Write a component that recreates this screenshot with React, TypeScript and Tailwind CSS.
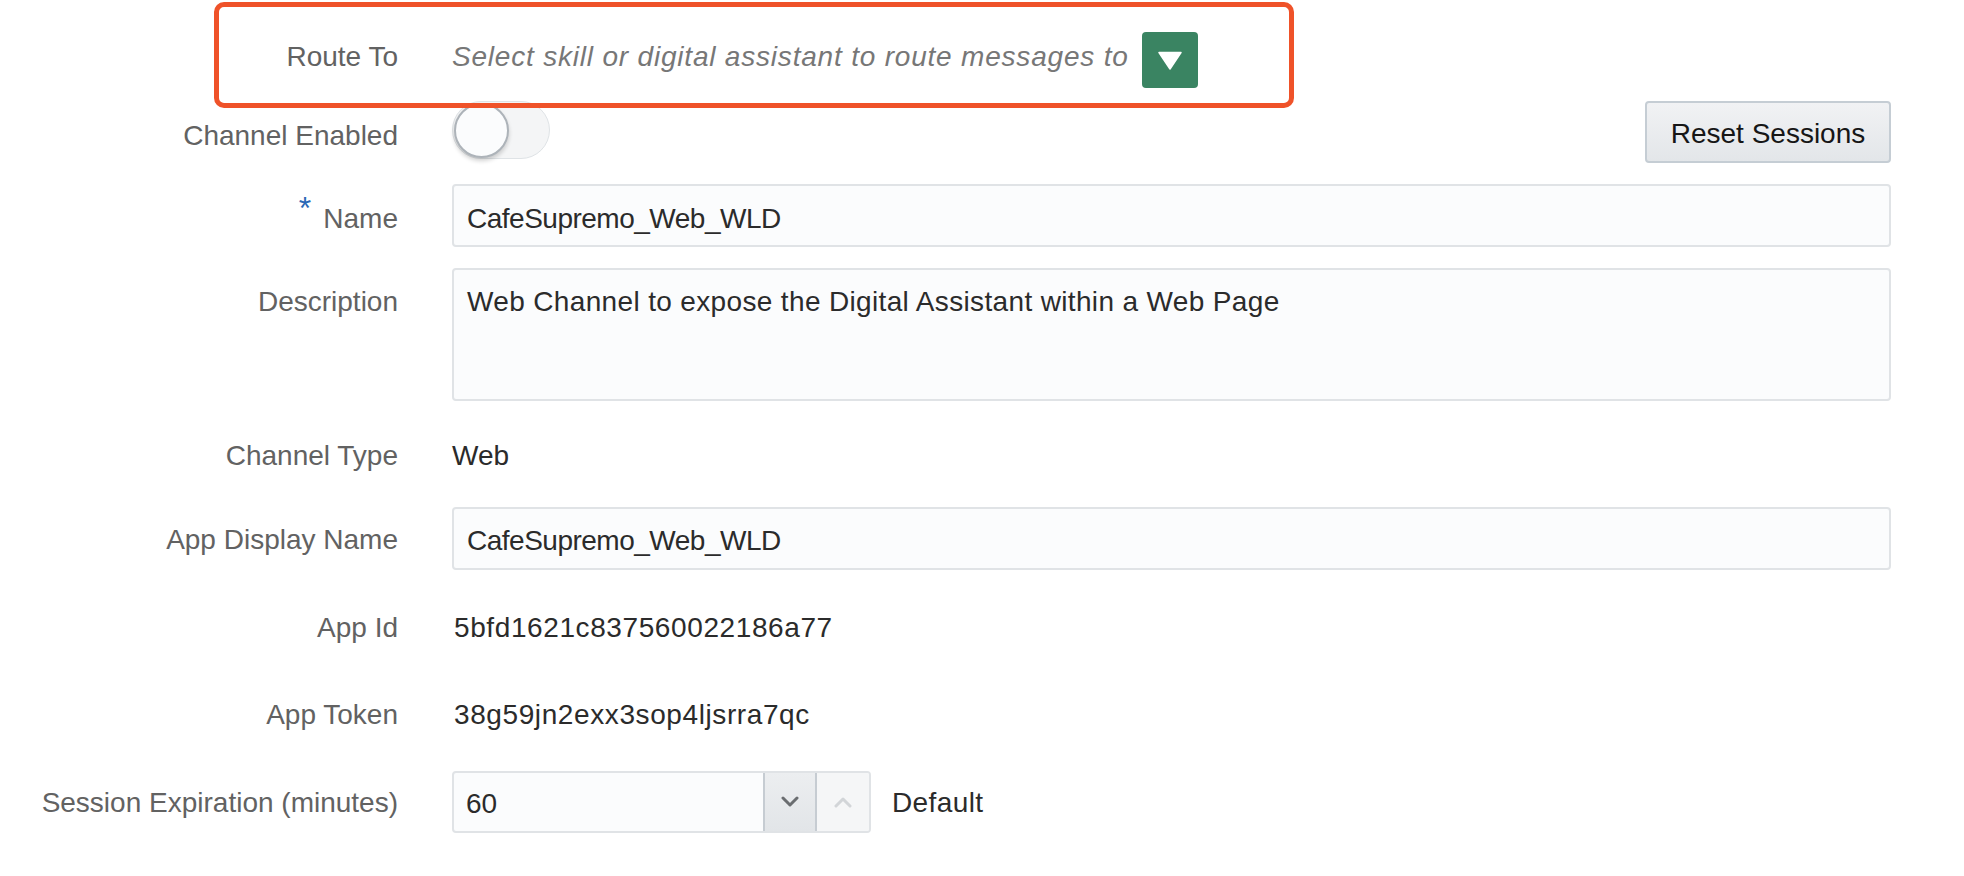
import React from "react";

function Label({ children, className = "" }: { children: React.ReactNode; className?: string }) {
    return (
        <div className={"w-[398px] shrink-0 text-right text-[#626262] " + className}>
            {children}
        </div>
    );
}

function Chevron({ up, color }: { up?: boolean; color: string }) {
    return (
        <svg width="18" height="12" viewBox="0 0 18 12">
            <polyline
                points={up ? "2,10 9,3 16,10" : "2,2 9,9 16,2"}
                fill="none"
                stroke={color}
                strokeWidth="3"
                strokeLinecap="round"
                strokeLinejoin="round"
            />
        </svg>
    );
}

export default function App() {
    const inputCls =
        "w-full h-[63px] px-[13px] pt-[6px] rounded-[4px] border-2 border-[#e0e3e6] bg-[#fbfcfd] text-[#2b2b2b] tracking-[-0.5px] outline-none";

    return (
        <div
            className="relative w-[1964px] h-[876px] bg-white pt-[32px] text-[28px] leading-[34px] overflow-hidden"
            style={{ fontFamily: '"Liberation Sans", Arial, sans-serif' }}
        >
            {/* annotation box around Route To */}
            <div className="absolute left-[214px] top-[2px] w-[1080px] h-[106px] border-[5px] border-[#ef5229] rounded-[10px] z-10" />

            {/* Route To */}
            <div className="flex items-center h-[56px]">
                <Label className="relative -top-[3px]">Route To</Label>
                <div className="ml-[54px] flex items-center">
                    <span className="relative -top-[3px] italic text-[#777777] tracking-[0.8px]">
                        Select skill or digital assistant to route messages to
                    </span>
                    <button className="ml-[13px] w-[56px] h-[56px] rounded-[4px] bg-[#3a8462] flex items-center justify-center">
                        <svg width="26" height="19" viewBox="0 0 26 19">
                            <path d="M2 1.5 H24 L13 18 Z" fill="#ffffff" strokeLinejoin="round" stroke="#ffffff" strokeWidth="1.5" />
                        </svg>
                    </button>
                </div>
            </div>

            {/* Channel Enabled */}
            <div className="flex items-center h-[63px] mt-[12px]">
                <Label className="pt-[8px]">Channel Enabled</Label>
                <div className="ml-[54px] w-[1439px] flex items-center justify-between">
                    <div className="w-[98px] h-[58px] rounded-full border border-[#dfe3e6] bg-[#f4f5f6] flex items-center -mt-[3px]">
                        <div className="ml-px w-[55px] h-[55px] rounded-full border-2 border-[#adb3b9] bg-[#fbfcfd] shadow-[0_3px_4px_rgba(0,0,0,0.18)]" />
                    </div>
                    <button className="w-[246px] h-[62px] pt-[5px] rounded-[4px] border-2 border-[#c5cdd4] bg-gradient-to-b from-[#f1f2f4] to-[#e3e6e9] text-[#161616]">
                        Reset Sessions
                    </button>
                </div>
            </div>

            {/* Name */}
            <div className="flex items-center h-[63px] mt-[21px]">
                <Label className="pt-[5px]">
                    <span className="relative -top-[9px] mr-[12px] text-[32px] text-[#2a68b5]">*</span>
                    Name
                </Label>
                <div className="ml-[54px] w-[1439px]">
                    <input readOnly value="CafeSupremo_Web_WLD" className={inputCls} />
                </div>
            </div>

            {/* Description */}
            <div className="flex items-start mt-[21px]">
                <Label className="pt-[17px]">Description</Label>
                <div className="ml-[54px] w-[1439px]">
                    <textarea
                        readOnly
                        value="Web Channel to expose the Digital Assistant within a Web Page"
                        className="block w-full h-[133px] px-[13px] pt-[15px] rounded-[4px] border-2 border-[#e0e3e6] bg-[#fbfcfd] text-[#2b2b2b] tracking-[0.35px] outline-none resize-none"
                    />
                </div>
            </div>

            {/* Channel Type */}
            <div className="flex items-center h-[62px] mt-[24px]">
                <Label>Channel Type</Label>
                <div className="ml-[54px] text-[#2b2b2b]">Web</div>
            </div>

            {/* App Display Name */}
            <div className="flex items-center h-[62px] mt-[20px]">
                <Label className="pt-[4px]">App Display Name</Label>
                <div className="ml-[54px] w-[1439px]">
                    <input readOnly value="CafeSupremo_Web_WLD" className={inputCls + " h-[62px]"} />
                </div>
            </div>

            {/* App Id */}
            <div className="flex items-center h-[62px] mt-[28px]">
                <Label>App Id</Label>
                <div className="ml-[56px] text-[#2b2b2b] tracking-[0.6px]">5bfd1621c837560022186a77</div>
            </div>

            {/* App Token */}
            <div className="flex items-center h-[62px] mt-[25px]">
                <Label>App Token</Label>
                <div className="ml-[56px] text-[#2b2b2b] tracking-[0.6px]">38g59jn2exx3sop4ljsrra7qc</div>
            </div>

            {/* Session Expiration */}
            <div className="flex items-center h-[62px] mt-[25px]">
                <Label className="pt-[2px]">Session Expiration (minutes)</Label>
                <div className="ml-[54px] flex items-center">
                    <div className="flex w-[419px] h-[62px] rounded-[4px] border-2 border-[#e0e3e6] bg-[#fbfcfd] overflow-hidden">
                        <input readOnly value="60" className="flex-1 min-w-0 px-[12px] pt-[3px] bg-transparent text-[#2b2b2b] outline-none" />
                        <div className="w-[54px] shrink-0 flex items-center justify-center border-l-2 border-r-2 border-[#c6ccd2] bg-gradient-to-b from-[#eceef0] to-[#e2e5e8]">
                            <Chevron color="#6a6d70" />
                        </div>
                        <div className="w-[52px] shrink-0 flex items-center justify-center bg-[#f5f6f7]">
                            <Chevron up color="#d2d5d8" />
                        </div>
                    </div>
                    <span className="ml-[21px] pt-[2px] text-[#2b2b2b] tracking-[0.4px]">Default</span>
                </div>
            </div>
        </div>
    );
}
